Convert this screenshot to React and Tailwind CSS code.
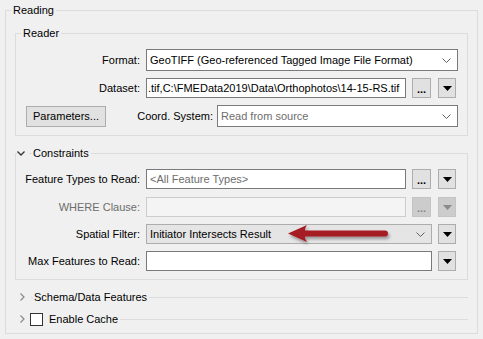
import React from "react";

function DownChevron() {
  return (
    <svg width="9" height="5" viewBox="0 0 9 5" className="shrink-0">
      <path d="M0.5 0.5 L4.5 4.5 L8.5 0.5" fill="none" stroke="#606060" />
    </svg>
  );
}

function RightChevron() {
  return (
    <svg width="5" height="8" viewBox="0 0 5 8" className="shrink-0">
      <path d="M0.5 0.5 L4 4 L0.5 7.5" fill="none" stroke="#8a8a8a" strokeWidth="1.2" />
    </svg>
  );
}

function Combo({ className, textClass = "text-black", children }) {
  return (
    <div className={`flex items-center justify-between pl-[3px] pr-[6px] ${className}`}>
      <span className={`whitespace-nowrap ${textClass}`}>{children}</span>
      <DownChevron />
    </div>
  );
}

function DotsButton({ disabled }) {
  return (
    <div
      className={
        disabled
          ? "flex h-[20px] w-[19px] items-end justify-center border border-[#c4c4c4] bg-[#cccccc] pb-[2px] text-[11px] font-bold leading-[11px] text-[#8a8a8a]"
          : "flex h-[20px] w-[19px] items-end justify-center border border-[#adadad] bg-[#e1e1e1] pb-[2px] text-[11px] font-bold leading-[11px] text-black"
      }
    >
      ...
    </div>
  );
}

function ArrowButton({ disabled }) {
  return (
    <div
      className={
        disabled
          ? "flex h-[20px] w-[18px] items-center justify-center border border-[#c4c4c4] bg-[#cccccc]"
          : "flex h-[20px] w-[18px] items-center justify-center border border-[#adadad] bg-[#e1e1e1]"
      }
    >
      <svg width="9" height="5" viewBox="0 0 9 5">
        <path d="M0 0 H9 L4.5 5 Z" fill={disabled ? "#8a8a8a" : "#000"} />
      </svg>
    </div>
  );
}

function Row({ label, muted, className = "", children }) {
  return (
    <div className={`flex items-center ${className}`}>
      <div className={muted ? "w-[124px] text-right text-[#6d6d6d]" : "w-[124px] text-right"}>{label}</div>
      <div className="ml-[6px] flex items-center">{children}</div>
    </div>
  );
}

export default function App() {
  return (
    <div className="relative h-[339px] w-[483px] bg-[#f0f0f0] pl-[5px] pt-[3px] font-['Liberation_Sans',Arial,sans-serif] text-[11px] leading-[14px] text-black">
      <fieldset className="h-[331px] w-[473px] border border-[#dcdcdc]">
        <legend className="ml-[5px] px-[2px]">Reading</legend>
        <div className="px-[9px] pt-[9px]">
          {/* Reader */}
          <fieldset className="h-[110px] w-[453px] border border-[#dcdcdc]">
            <legend className="ml-[5px] px-[2px]">Reader</legend>
            <div className="flex flex-col pt-[9px]">
              <Row label="Format:">
                <Combo className="h-[22px] w-[312px] border border-[#7a7a7a] bg-white">
                  GeoTIFF (Geo-referenced Tagged Image File Format)
                </Combo>
              </Row>
              <Row label="Dataset:" className="mt-[7px]">
                <div className="flex h-[20px] w-[260px] items-center overflow-hidden border border-[#7a7a7a] bg-white pl-[1px]">
                  <span className="whitespace-nowrap">.tif,C:\FMEData2019\Data\Orthophotos\14-15-RS.tif</span>
                </div>
                <div className="ml-[6px]">
                  <DotsButton />
                </div>
                <div className="ml-[7px]">
                  <ArrowButton />
                </div>
              </Row>
              <div className="mt-[7px] flex w-[442px] items-center">
                <div className="ml-[10px] flex h-[21px] w-[80px] shrink-0 items-center justify-center border border-[#adadad] bg-[#e1e1e1]">
                  Parameters...
                </div>
                <div className="flex-1 text-right whitespace-nowrap">Coord. System:</div>
                <div className="ml-[4px]">
                  <Combo className="h-[22px] w-[241px] border border-[#7a7a7a] bg-white" textClass="text-[#6d6d6d]">
                    Read from source
                  </Combo>
                </div>
              </div>
            </div>
          </fieldset>

          {/* Constraints */}
          <fieldset className="mt-[10px] h-[134px] w-[453px] border border-[#dcdcdc]">
            <legend className="ml-[1px] flex items-center">
              <svg width="8" height="5" viewBox="0 0 8 5" className="shrink-0">
                <path d="M0.5 0.5 L4 4 L7.5 0.5" fill="none" stroke="#333" strokeWidth="1.3" />
              </svg>
              <span className="ml-[4px] h-px w-[3px] bg-[#dcdcdc]" />
              <span className="ml-px pr-[2px]">Constraints</span>
            </legend>
            <div className="flex flex-col pt-[9px]">
              <Row label="Feature Types to Read:">
                <div className="flex h-[20px] w-[260px] items-center border border-[#7a7a7a] bg-white pl-[3px] text-[#6d6d6d]">
                  &lt;All Feature Types&gt;
                </div>
                <div className="ml-[6px]">
                  <DotsButton />
                </div>
                <div className="ml-[7px]">
                  <ArrowButton />
                </div>
              </Row>
              <Row label="WHERE Clause:" muted className="mt-[8px]">
                <div className="h-[20px] w-[260px] border border-[#cccccc] bg-[#f4f4f4]" />
                <div className="ml-[6px]">
                  <DotsButton disabled />
                </div>
                <div className="ml-[7px]">
                  <ArrowButton disabled />
                </div>
              </Row>
              <Row label="Spatial Filter:" className="mt-[7px]">
                <Combo className="h-[20px] w-[286px] border border-[#adadad] bg-[#e5e5e5]">
                  Initiator Intersects Result
                </Combo>
                <div className="ml-[6px]">
                  <ArrowButton />
                </div>
              </Row>
              <Row label="Max Features to Read:" className="mt-[7px]">
                <div className="h-[20px] w-[286px] border border-[#7a7a7a] bg-white" />
                <div className="ml-[6px]">
                  <ArrowButton />
                </div>
              </Row>
            </div>
          </fieldset>

          {/* Collapsed groups */}
          <div className="mt-[10px] flex h-[14px] items-center">
            <div className="ml-[5px]">
              <RightChevron />
            </div>
            <span className="ml-[6px] h-px w-[2px] bg-[#dcdcdc]" />
            <span className="ml-px whitespace-nowrap">Schema/Data Features</span>
            <span className="ml-[2px] h-px flex-1 bg-[#dcdcdc]" />
          </div>
          <div className="mt-[8px] flex h-[14px] items-center">
            <div className="ml-[5px]">
              <RightChevron />
            </div>
            <span className="ml-[5px] h-[13px] w-[13px] border border-[#333333] bg-white" />
            <span className="ml-[6px] whitespace-nowrap">Enable Cache</span>
            <span className="ml-[2px] h-px flex-1 bg-[#dcdcdc]" />
          </div>
        </div>
      </fieldset>

      {/* annotation arrow */}
      <svg width="116" height="32" viewBox="0 0 116 32" className="absolute left-[280px] top-[220px]">
        <defs>
          <filter id="sh" x="-10%" y="-30%" width="130%" height="180%">
            <feDropShadow dx="1.5" dy="2.5" stdDeviation="1.5" floodColor="#000" floodOpacity="0.35" />
          </filter>
        </defs>
        <path
          d="M8 13.5 L27 5 Q24.5 9 25 10.5 L105 10.5 A3 3 0 0 1 105 16.5 L25 16.5 Q24.5 18 27 22 Z"
          fill="#a51c24"
          filter="url(#sh)"
        />
      </svg>
    </div>
  );
}
